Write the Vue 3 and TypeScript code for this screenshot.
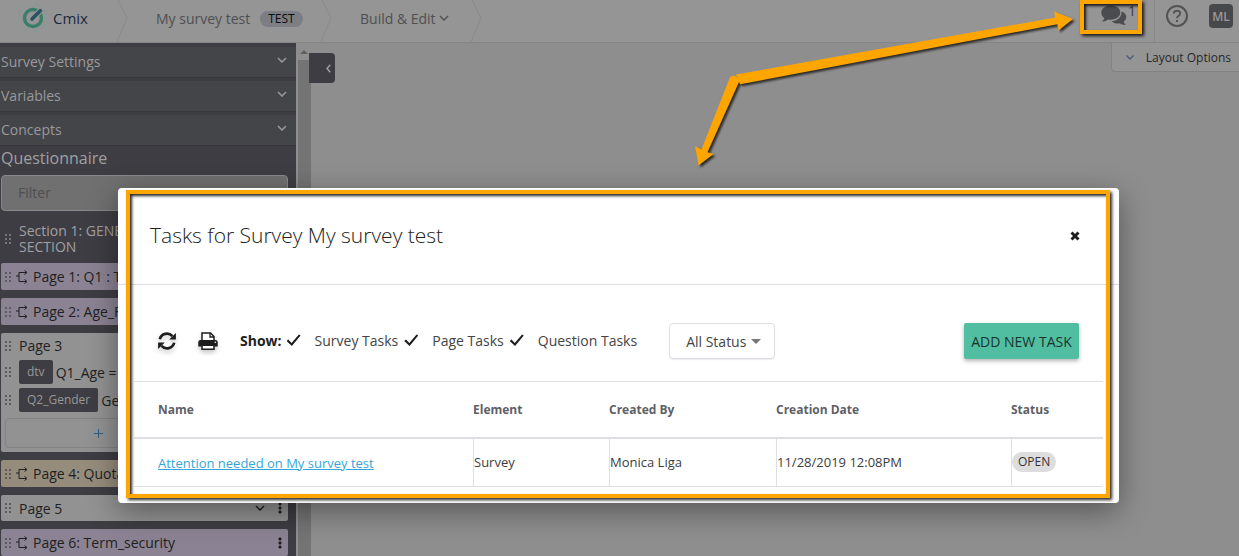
<script setup lang="ts">
import { ref } from 'vue'

interface Task {
  name: string
  element: string
  author: string
  created: string
  status: string
}

const panels: string[] = ['Survey Settings', 'Variables', 'Concepts']
const columns: string[] = ['Name', 'Element', 'Created By', 'Creation Date', 'Status']
const tasks: Task[] = [
  {
    name: 'Attention needed on My survey test',
    element: 'Survey',
    author: 'Monica Liga',
    created: '11/28/2019 12:08PM',
    status: 'OPEN',
  },
]
const filters = ref([
  { id: 'survey', label: 'Survey Tasks', on: true },
  { id: 'page', label: 'Page Tasks', on: true },
  { id: 'question', label: 'Question Tasks', on: true },
])
const status = ref('All Status')
const query = ref('')
const rays: number[] = Array.from({ length: 24 }, (_, i) => i * 15)
</script>

<template>
  <div class="app">
    <header class="topbar">
      <a href="#" class="brand">
        <svg class="logo" viewBox="0 0 32 32" aria-hidden="true">
          <g stroke="#829c93" stroke-width="1">
            <line v-for="r in rays" :key="r" x1="16" y1="1" x2="16" y2="4" :transform="`rotate(${r} 16 16)`" />
          </g>
          <circle cx="16" cy="16" r="8.500" fill="none" stroke="#3a7d6b" stroke-width="3.400" />
          <path d="M15 17L24.500 7.500" stroke="#959595" stroke-width="6" />
          <path d="M15 17L23.300 8.700" stroke="#2a5261" stroke-width="3.600" stroke-linecap="round" />
        </svg>
        <span>Cmix</span>
      </a>
      <svg class="sep" viewBox="0 0 12 42" aria-hidden="true"><path d="M2 0L11 18L1 42" /></svg>
      <a href="#" class="crumb survey">My survey test <span class="pill">TEST</span></a>
      <svg class="sep" viewBox="0 0 12 42" aria-hidden="true"><path d="M2 0L11 18L1 42" /></svg>
      <button type="button" class="crumb build">
        Build &amp; Edit
        <svg viewBox="0 0 10 6" width="10" height="6" aria-hidden="true"><path d="M1 1L5 5L9 1" fill="none" stroke="#555" stroke-width="1.500" /></svg>
      </button>
      <svg class="sep" viewBox="0 0 12 42" aria-hidden="true"><path d="M2 0L11 18L1 42" /></svg>
      <div class="tools">
        <button type="button" class="chat" aria-label="Tasks">
          <svg viewBox="0 0 26 22" width="26" height="22" aria-hidden="true">
            <path d="M20.500 6.500C24 7.500 25.600 10 25.200 12.600C25 14.400 24 15.800 22.600 16.800C23 18 23.800 19 24.800 19.900C22.300 20.100 20.300 19.300 18.800 18.300C15.800 18.800 12.600 18.200 10.600 16.200C16.500 16 20.800 12.300 20.500 6.500Z" fill="#4b4c50" />
            <path d="M9.800 .5C15.200 .5 19.300 3.500 19.300 7.600C19.300 11.700 15.200 14.700 9.800 14.700C8.800 14.700 7.900 14.600 7 14.400C5.500 15.600 3.500 16.500 1.200 16.500C2.200 15.500 3 14.400 3.300 13.100C1.400 11.800 .3 9.800 .3 7.600C.3 3.500 4.400 .5 9.800 .5Z" fill="#4b4c50" />
          </svg>
          <span class="count">1</span>
        </button>
        <button type="button" class="help" aria-label="Help">
          <svg viewBox="0 0 24 24" width="24" height="24" fill="none" stroke="#535355" stroke-width="2" aria-hidden="true">
            <circle cx="12" cy="12" r="10" />
            <path d="M8.800 9.500C8.800 5.800 15.200 5.800 15.200 9.400C15.200 11.800 12 11.600 12 14.200" />
            <path d="M12 16V18" />
          </svg>
        </button>
        <button type="button" class="avatar">ML</button>
      </div>
    </header>

    <div class="workspace">
      <aside class="sidebar">
        <button v-for="p in panels" :key="p" type="button" class="panel">
          {{ p }}
          <svg viewBox="0 0 10 6" width="10" height="6" aria-hidden="true"><path d="M1 1L5 5L9 1" fill="none" stroke="#96969a" stroke-width="1.600" /></svg>
        </button>
        <h2>Questionnaire</h2>
        <input v-model="query" class="filter" type="text" placeholder="Filter" aria-label="Filter" />
        <div class="section"><i class="grip"></i><span>Section 1: GENERAL SECTION</span></div>

        <div class="node lilac"><i class="grip"></i><svg class="branch" viewBox="0 0 12 14"><path d="M0 6H3M10 2.500H3V11.500H10" /><path d="M8.500 .5L11 2.500L8.500 4.500M8.500 9.500L11 11.500L8.500 13.500" /></svg>Page 1: Q1 : Terms</div>
        <div class="node lilac"><i class="grip"></i><svg class="branch" viewBox="0 0 12 14"><path d="M0 6H3M10 2.500H3V11.500H10" /><path d="M8.500 .5L11 2.500L8.500 4.500M8.500 9.500L11 11.500L8.500 13.500" /></svg>Page 2: Age_Filter</div>
        <div class="card">
          <div class="line title"><i class="grip"></i>Page 3</div>
          <div class="line"><i class="grip"></i><span class="tag">dtv</span>Q1_Age = 18</div>
          <div class="line"><i class="grip"></i><span class="tag">Q2_Gender</span>Gender</div>
          <button type="button" class="plus" aria-label="Add question">
            <svg viewBox="0 0 9 9" width="9" height="9" stroke="#2f5f85" aria-hidden="true"><path d="M0 4.500H9M4.500 0V9" /></svg>
          </button>
        </div>
        <div class="node sand"><i class="grip"></i><svg class="branch" viewBox="0 0 12 14"><path d="M0 6H3M10 2.500H3V11.500H10" /><path d="M8.500 .5L11 2.500L8.500 4.500M8.500 9.500L11 11.500L8.500 13.500" /></svg>Page 4: Quota</div>
        <div class="node plain">
          <i class="grip"></i>Page 5
          <span class="end">
            <svg viewBox="0 0 10 6" width="10" height="6" aria-hidden="true"><path d="M1 1L5 5L9 1" fill="none" stroke="#1c1c1e" stroke-width="1.400" /></svg>
            <i class="dots"></i>
          </span>
        </div>
        <div class="node lilac">
          <i class="grip"></i><svg class="branch" viewBox="0 0 12 14"><path d="M0 6H3M10 2.500H3V11.500H10" /><path d="M8.500 .5L11 2.500L8.500 4.500M8.500 9.500L11 11.500L8.500 13.500" /></svg>Page 6: Term_security
          <span class="end"><i class="dots"></i></span>
        </div>
      </aside>
      <div class="scroll"><i class="up"></i><i class="thumb"></i></div>
      <button type="button" class="collapse" aria-label="Collapse sidebar">
        <svg viewBox="0 0 5 9" width="5" height="9" aria-hidden="true"><path d="M4.200 .8L1 4.500L4.200 8.200" fill="none" stroke="#a0a0a4" stroke-width="1.400" /></svg>
      </button>
      <main class="canvas">
        <button type="button" class="layout">
          <svg viewBox="0 0 8 5" width="8" height="5" aria-hidden="true"><path d="M.5 .5L4 4L7.500 .5" fill="none" stroke="#4c5a75" stroke-width="1.300" /></svg>
          Layout Options
        </button>
      </main>
    </div>

    <div class="overlay">
      <section class="dialog" role="dialog" aria-labelledby="dialog-title">
        <div class="dialog-head">
          <h1 id="dialog-title">Tasks for Survey My survey test</h1>
          <button type="button" class="close" aria-label="Close">
            <svg viewBox="0 0 10 10" width="10" height="10" aria-hidden="true"><path d="M1.500 1.500L8.500 8.500M8.500 1.500L1.500 8.500" stroke="#1d1d1d" stroke-width="2.900" /></svg>
          </button>
        </div>
        <div class="dialog-body">
          <div class="toolbar">
            <button type="button" class="icon" aria-label="Refresh">
              <svg viewBox="0 0 18 18" width="18" height="18" aria-hidden="true">
                <path d="M1.800 7.200C3.200 1.500 10.500 -.2 14.400 4.200M16.200 10.800C14.800 16.500 7.500 18.200 3.600 13.800" fill="none" stroke="#1d1d1d" stroke-width="2.700" />
                <path d="M17.900 1V7.500H11.200ZM.1 17V10.500H6.800Z" fill="#1d1d1d" />
              </svg>
            </button>
            <button type="button" class="icon" aria-label="Print">
              <svg viewBox="0 0 20 18" width="20" height="18" aria-hidden="true">
                <path d="M4 9V1H12.500L16 4.500V9" fill="#fff" stroke="#1d1d1d" stroke-width="1.500" />
                <path d="M12 1V5H16" fill="none" stroke="#1d1d1d" stroke-width="1.300" />
                <path d="M2.500 8H17.500Q19.700 8 19.700 10.200V14.500H.3V10.200Q.3 8 2.500 8Z" fill="#1d1d1d" />
                <path d="M4 13.300H16V17.200H4Z" fill="#fff" stroke="#1d1d1d" stroke-width="1.500" />
                <circle cx="17.300" cy="10.200" r=".8" fill="#fff" />
              </svg>
            </button>
            <strong>Show:</strong>
            <label v-for="f in filters" :key="f.id" class="check">
              <input v-model="f.on" type="checkbox" />{{ f.label }}
            </label>
            <div class="picker">
              <select v-model="status" aria-label="Status">
                <option>All Status</option>
                <option>Open</option>
                <option>Closed</option>
              </select>
              <i class="caret"></i>
            </div>
            <button type="button" class="add">ADD NEW TASK</button>
          </div>
          <table>
            <colgroup>
              <col class="c-name" /><col class="c-element" /><col class="c-author" /><col class="c-date" /><col class="c-status" />
            </colgroup>
            <thead>
              <tr><th v-for="c in columns" :key="c" scope="col">{{ c }}</th></tr>
            </thead>
            <tbody>
              <tr v-for="t in tasks" :key="t.name">
                <td><a href="#">{{ t.name }}</a></td>
                <td>{{ t.element }}</td>
                <td>{{ t.author }}</td>
                <td>{{ t.created }}</td>
                <td><span class="open">{{ t.status }}</span></td>
              </tr>
            </tbody>
          </table>
        </div>
        <div class="frame dialog-frame"></div>
      </section>
    </div>

    <div class="frame chat-frame"></div>
    <svg class="arrows" viewBox="0 0 400 180" width="400" height="180" aria-hidden="true">
      <path d="M56 74.500L375 17.600L374.300 11.500L393 19L378.500 30.500L377.300 24.300L60 84.300Z" />
      <path d="M49.500 78.500C51 73.500 60 75.500 59 82L27.500 152.300L33.500 154L18.500 165.500L15 146L21.500 149.500Z" />
    </svg>
  </div>
</template>

<style>
html,
body {
  margin: 0;
  background: #8e8e8e;
}
</style>

<style scoped>
* {
  box-sizing: border-box;
}
.app {
  position: relative;
  display: flex;
  flex-direction: column;
  height: 100vh;
  overflow: hidden;
  background: #8e8e8e;
  color: #1f1f21;
  font-family: 'Open Sans', 'Noto Sans', sans-serif;
  font-size: 14px;
}
button,
input,
select {
  margin: 0;
  padding: 0;
  border: 0;
  background: none;
  color: inherit;
  font: inherit;
}
svg {
  flex: none;
}
.topbar {
  display: flex;
  flex: none;
  height: 43px;
  border-bottom: 1px solid #858585;
  background: #959595;
}
.brand {
  display: flex;
  align-items: center;
  gap: 4px;
  width: 116px;
  height: 36px;
  padding-left: 17px;
  color: #1d2a3e;
  font-size: 15px;
  text-decoration: none;
}
.logo {
  width: 32px;
  height: 32px;
}
.sep {
  width: 12px;
  height: 42px;
  fill: none;
  stroke: #8a8a8a;
}
.crumb {
  display: flex;
  align-items: center;
  height: 36px;
  color: #4f4f52;
  text-decoration: none;
}
.survey {
  gap: 10px;
  width: 192px;
  padding-left: 28px;
}
.build {
  gap: 3px;
  width: 138px;
  padding-left: 28px;
}
.pill {
  margin-top: 2px;
  padding: 0 8px;
  border-radius: 8px;
  background: #7c7e83;
  color: #0c0c0d;
  font-size: 12px;
  line-height: 16px;
}
.tools {
  display: flex;
  align-items: flex-start;
  margin-left: auto;
  padding-right: 6px;
}
.chat {
  display: flex;
  align-items: flex-start;
  gap: 1px;
  width: 54px;
  height: 42px;
  padding-top: 5px;
  border-right: 1px solid #8a8a8a;
}
.count {
  color: #3d3d40;
  font-size: 14px;
  line-height: 12px;
}
.help {
  height: 24px;
  margin: 4px 20px 0 10px;
}
.avatar {
  width: 24px;
  height: 24px;
  margin-top: 4px;
  border-radius: 4px;
  background: #47484b;
  color: #999;
  font-size: 12px;
  font-weight: 600;
}
.workspace {
  display: flex;
  flex: 1;
  min-height: 0;
}
.sidebar {
  flex: none;
  width: 296px;
  padding-top: 4px;
  overflow: hidden;
  background: #3e3d43;
}
.panel {
  display: flex;
  align-items: center;
  justify-content: space-between;
  width: 100%;
  height: 30px;
  margin-bottom: 4px;
  padding: 0 9px 2px 1px;
  background: #444549;
  box-shadow: 0 1px 1px #37363b;
  color: #99999c;
}
.panel svg {
  margin-bottom: 2px;
}
h2 {
  margin: 0 0 8px 1px;
  color: #a0a0a2;
  font-size: 16px;
  font-weight: 400;
  line-height: 18px;
}
.filter {
  display: block;
  width: 287px;
  height: 36px;
  margin-left: 1px;
  padding: 0 16px 2px;
  border: 1px solid #88888b;
  border-radius: 4px;
  background: #707071;
}
.filter::placeholder {
  color: #4e4e50;
  opacity: 1;
}
.section {
  display: flex;
  align-items: center;
  gap: 7px;
  width: 160px;
  height: 52px;
  padding: 4px 0 0 4px;
  color: #a0a0a2;
  line-height: 16px;
}
.section .grip {
  color: #77777a;
}
.grip {
  flex: none;
  width: 8px;
  height: 12px;
  background: radial-gradient(circle, currentColor 1px, transparent 1px) 0 0 / 4px 4px;
  color: #5c5b60;
}
.node {
  display: flex;
  align-items: center;
  width: 287px;
  height: 27px;
  margin: 0 0 8px 1px;
  padding-left: 3px;
  border-radius: 2px;
  white-space: nowrap;
}
.node.lilac {
  background: #8b8393;
}
.node.sand {
  background: #958c7c;
}
.node.plain {
  height: 26px;
  background: #929292;
}
.node.plain .grip {
  margin-right: 7px;
}
.branch {
  width: 12px;
  height: 14px;
  margin: 0 5px 0 4px;
  fill: none;
  stroke: #1f1f21;
}
.end {
  display: flex;
  align-items: center;
  gap: 13px;
  margin-left: auto;
  padding-right: 6px;
}
.dots {
  width: 4px;
  height: 12px;
  background: radial-gradient(circle, #1c1c1e 1px, transparent 2px) 0 0 / 4px 4px;
}
.card {
  width: 287px;
  height: 119px;
  margin: 0 0 8px 1px;
  border-radius: 2px;
  background: #929292;
}
.line {
  display: flex;
  align-items: center;
  gap: 7px;
  height: 24px;
  margin-bottom: 4px;
  padding-left: 3px;
}
.line.title {
  height: 27px;
  margin: 0;
  padding-bottom: 2px;
}
.tag {
  margin-right: -4px;
  padding: 0 8px;
  border-radius: 2px;
  background: #3e3d43;
  color: #98989a;
  font-size: 12px;
  line-height: 24px;
}
.plus {
  display: flex;
  align-items: center;
  justify-content: center;
  width: 186px;
  height: 30px;
  margin: 6px 0 0 4px;
  border: 1px solid #828284;
  border-radius: 4px;
}
.scroll {
  display: flex;
  flex: none;
  flex-direction: column;
  width: 15px;
  padding: 7px 0 0 2px;
}
.up {
  width: 8px;
  margin-left: 2px;
  border: 4px solid transparent;
  border-top: 0;
  border-bottom-color: #606060;
}
.thumb {
  flex: 1;
  margin-top: 6px;
  background: #747474;
}
.collapse {
  z-index: 1;
  display: flex;
  align-items: center;
  justify-content: flex-end;
  width: 26px;
  height: 30px;
  margin: 10px 0 0 -2px;
  padding-right: 4px;
  border-radius: 0 4px 4px 0;
  background: #3e3d43;
}
.canvas {
  display: flex;
  flex: 1;
  align-items: flex-start;
  justify-content: flex-end;
}
.layout {
  display: flex;
  align-items: center;
  gap: 12px;
  height: 29px;
  padding: 0 8px 0 14px;
  border: solid #828282;
  border-width: 0 0 1px 1px;
  border-radius: 0 0 0 4px;
  background: #949494;
  color: #27272a;
  font-size: 12px;
}
.overlay {
  position: absolute;
  inset: 0;
  padding: 188px 120px 0 118px;
}
.dialog {
  position: relative;
  padding-bottom: 16px;
  border-radius: 4px;
  background: #fff;
  box-shadow: 0 8px 30px rgba(0, 0, 0, 0.4);
}
.dialog-head {
  display: flex;
  align-items: center;
  justify-content: space-between;
  height: 97px;
  padding: 0 39px 0 32px;
  border-bottom: 1px solid #dcdde3;
}
h1 {
  margin: 0;
  padding-bottom: 2px;
  color: #222;
  font-size: 21px;
  font-weight: 300;
}
.close {
  display: flex;
}
.dialog-body {
  padding: 0 16px;
}
.toolbar {
  display: flex;
  align-items: center;
  height: 97px;
  padding: 36px 24px 20px;
  border-bottom: 1px solid #dddee6;
  color: #444;
}
.icon {
  display: flex;
  margin-right: 22px;
  filter: drop-shadow(0 3px 2px rgba(0, 0, 0, 0.2));
}
.toolbar strong {
  margin-right: 5px;
  padding-bottom: 2px;
  color: #222;
}
.check {
  display: flex;
  align-items: center;
  margin-right: 6px;
  padding-bottom: 2px;
  white-space: nowrap;
}
.check input {
  width: 14px;
  height: 12px;
  margin-right: 14px;
  appearance: none;
}
.check input:checked {
  background: #1d1d1d;
  clip-path: polygon(0 58%, 12% 46%, 36% 74%, 88% 4%, 100% 12%, 38% 100%);
}
.picker {
  position: relative;
  margin-left: 26px;
}
.picker select {
  width: 106px;
  height: 36px;
  padding-left: 16px;
  border: 1px solid #dddee6;
  border-radius: 4px;
  box-shadow: 0 1px 1px rgba(0, 0, 0, 0.08);
  appearance: none;
}
.caret {
  position: absolute;
  top: 16px;
  right: 14px;
  border: 5px solid transparent;
  border-top-color: #777;
  border-bottom: 0;
  pointer-events: none;
}
.add {
  width: 115px;
  height: 36px;
  margin-left: auto;
  border-radius: 2px;
  background: #52bea1;
  box-shadow: 0 2px 4px rgba(0, 0, 0, 0.3);
  color: #17352e;
  white-space: nowrap;
}
table {
  width: 100%;
  border-collapse: separate;
  border-spacing: 0;
  table-layout: fixed;
}
.c-name {
  width: 339px;
}
.c-element {
  width: 136px;
}
.c-author {
  width: 167px;
}
.c-date {
  width: 235px;
}
.c-status {
  width: 92px;
}
th {
  height: 57px;
  padding: 0;
  border-bottom: 2px solid #dddee6;
  color: #5f5f66;
  font-size: 12px;
  text-align: left;
}
td {
  height: 48px;
  padding: 0 0 2px;
  border-bottom: 1px solid #dddee6;
  border-left: 1px solid #dddee6;
  color: #3c3c3c;
  font-size: 13px;
}
th:first-child,
td:first-child {
  padding: 0 0 0 24px;
  border-left: 0;
}
td a {
  color: #35a5d8;
}
.open {
  display: inline-block;
  padding: 0 6px;
  border-radius: 10px;
  background: #ddd;
  color: #333;
  font-size: 12px;
  line-height: 20px;
}
.frame {
  position: absolute;
  border: 4px solid #ffa500;
  box-shadow: 2px 2px 3px rgba(0, 0, 0, 0.85), inset 2px 2px 3px rgba(0, 0, 0, 0.85);
  pointer-events: none;
}
.dialog-frame {
  inset: 2px 9px 5px 8px;
}
.chat-frame {
  top: 0;
  right: 97px;
  width: 62px;
  height: 34px;
}
.arrows {
  position: absolute;
  top: 0;
  right: 159px;
  fill: #ffa500;
  filter: drop-shadow(2px 2px 1px rgba(0, 0, 0, 0.7));
  pointer-events: none;
}
</style>
